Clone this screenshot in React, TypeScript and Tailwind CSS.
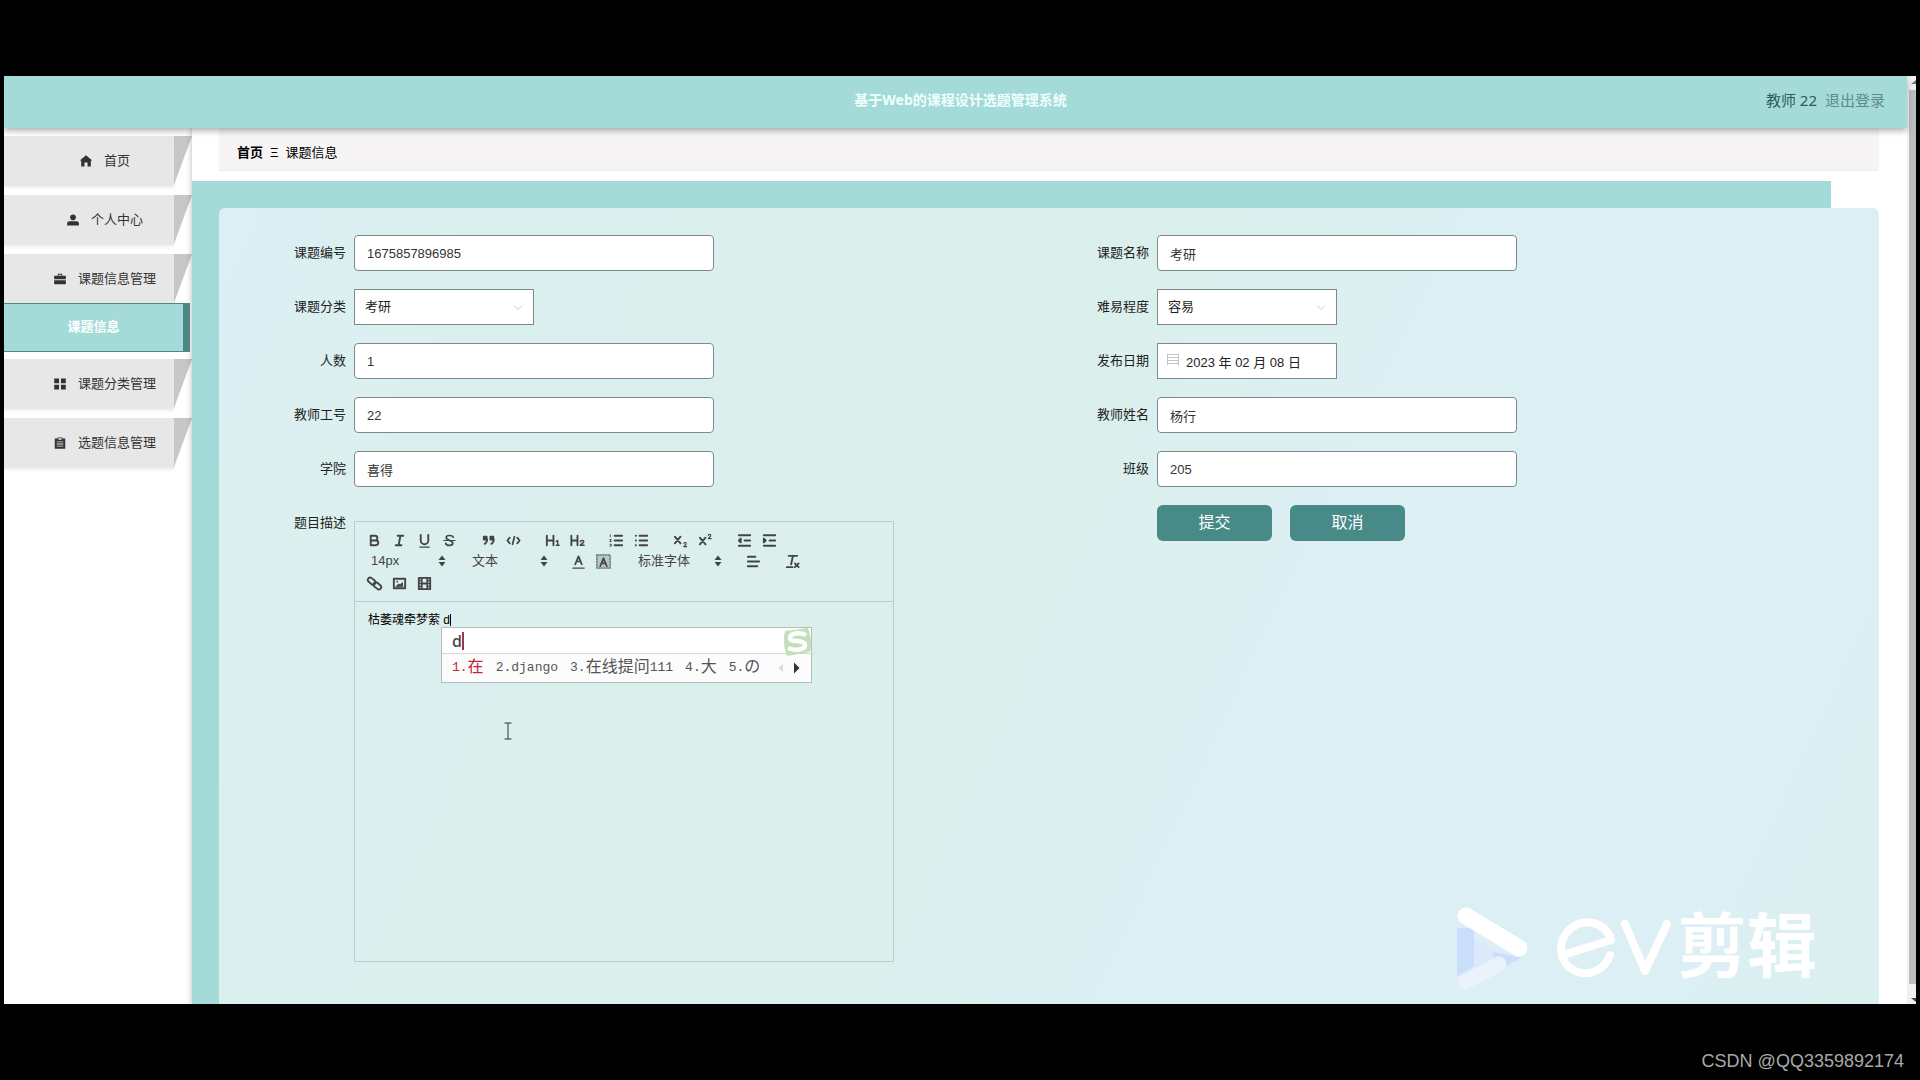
import React, { ReactNode } from "react";

const FONT = 'font-["Liberation_Sans","Noto_Sans_CJK_SC",sans-serif]';

function Icon({ d, className }: { d: string; className: string }) {
  return (
    <svg viewBox="0 0 1024 1024" className={className} fill="currentColor" aria-hidden="true">
      <path fillRule="evenodd" d={d} />
    </svg>
  );
}

const HOME = "M512 30 30 420V500H100V980H380V640H644V980H924V500H994V420Z";
const USER = "M512 40A245 245 0 1 1 512 530A245 245 0 0 1 512 40ZM10 984V800Q10 620 200 610H824Q1014 620 1014 800V984Z";
const CASE = "M320 230V100Q320 70 350 70H674Q704 70 704 100V230H980Q1010 230 1010 260V540H14V260Q14 230 44 230ZM390 140V230H634V140ZM14 610H1010V920Q1010 950 980 950H44Q14 950 14 920Z";
const GRID = "M20 40H430V440H20ZM594 40H1004V440H594ZM20 580H430V980H20ZM594 580H1004V980H594Z";
const CLIP = "M300 130V40H724V130H960V1000H64V130ZM370 100V230H654V100ZM230 380V450H794V380ZM230 560V630H794V560ZM230 740V810H794V740Z";

function SideItem({ icon, label }: { icon: string; label: string }) {
  return (
    <a href="#" className="flex h-[50px] w-full text-[#333]">
      <span className="flex min-w-0 flex-1 items-center justify-center gap-3 bg-[#e8e7e7] pl-8 shadow-[0_2px_3px_#eeeeee]">
        <Icon d={icon} className="size-3" />
        <span className="whitespace-nowrap">{label}</span>
      </span>
      <svg viewBox="0 0 18 50" className="h-[50px] w-[18px] shrink-0" preserveAspectRatio="none" aria-hidden="true">
        <polygon points="0,0 18,0 0,49" fill="#c8c6c7" />
      </svg>
    </a>
  );
}

function Field({ id, label, top, children }: { id: string; label: string; top?: boolean; children: ReactNode }) {
  return (
    <div className={top ? "flex items-start" : "flex h-9 items-center"}>
      <label htmlFor={id} className={top ? "w-[108px] shrink-0 pr-2 text-right leading-9" : "w-[108px] shrink-0 pr-2 text-right"}>
        {label}
      </label>
      {children}
    </div>
  );
}

function TextField({ id, label, value }: { id: string; label: string; value: string }) {
  return (
    <Field id={id} label={label}>
      <input id={id} type="text" defaultValue={value} className="h-9 w-[360px] rounded border border-[#7b8a8a] bg-white px-3 text-[#333]" />
    </Field>
  );
}

function SelectField({ id, label, value }: { id: string; label: string; value: string }) {
  return (
    <Field id={id} label={label}>
      <div className="relative">
        <select id={id} className="h-9 w-[180px] appearance-none border border-[#7b8a8a] bg-white px-[10px] text-[#222]">
          <option>{value}</option>
        </select>
        <svg viewBox="0 0 12 12" className="pointer-events-none absolute top-3 right-[10px] size-3" fill="none" stroke="#c9ccd3" aria-hidden="true">
          <path d="M2 4.5 6 8.5 10 4.5" />
        </svg>
      </div>
    </Field>
  );
}

function Tool({ name, children }: { name: string; children: ReactNode }) {
  return (
    <button type="button" aria-label={name} className="flex h-5 w-[25px] items-center justify-center">
      <svg viewBox="0 0 18 18" className="size-[17px]" fill="none" stroke="#444" strokeWidth="2" strokeLinecap="round" strokeLinejoin="round">
        {children}
      </svg>
    </button>
  );
}

function Picker({ label, value }: { label: string; value: string }) {
  return (
    <button type="button" aria-label={label} className="flex h-5 items-center justify-between text-[#444]">
      {value}
      <svg viewBox="0 0 8 12" className="h-3 w-2" fill="#444" aria-hidden="true">
        <path d="M0.500 5 4 0.500 7.500 5ZM0.500 7 4 11.500 7.500 7Z" />
      </svg>
    </button>
  );
}

function Toolbar() {
  return (
    <div className="flex h-20 flex-col border-b border-[#b9cfce] px-[7px] pt-2">
      <div className="flex h-5">
        <Tool name="粗体">
          <path d="M5 4H9.500A2.500 2.500 0 0 1 9.500 9H5ZM5 9H10.500A2.500 2.500 0 0 1 10.500 14H5Z" />
        </Tool>
        <Tool name="斜体">
          <path d="M7 4H13M5 14H11M8 14 10 4" />
        </Tool>
        <Tool name="下划线">
          <path d="M5 3V9A4 4 0 0 0 13 9V3" />
          <path d="M4 16H14" strokeWidth="1.400" />
        </Tool>
        <Tool name="删除线">
          <path d="M13 5.500C12 3 5.500 3 5.500 6C5.500 9 12.500 8.500 12.500 12C12.500 15 5.500 15 5 12" strokeWidth="1.800" />
          <path d="M3 9H15" strokeWidth="1.300" />
        </Tool>
        <span className="w-[14px]" />
        <Tool name="引用">
          <path d="M4 5H7V8H4ZM11 5H14V8H11Z" fill="#444" />
          <path d="M7.500 8C7.500 11 6 12 5 12.500M14.500 8C14.500 11 13 12 12 12.500" />
        </Tool>
        <Tool name="代码">
          <path d="M5 6 2.500 9 5 12M13 6 15.500 9 13 12M10 5 8 13" strokeWidth="1.800" />
        </Tool>
        <span className="w-[14px]" />
        <Tool name="标题一">
          <path d="M3 4V14M10 4V14M3 9H10" />
          <path d="M13 10 14.500 9V14M13 14H16" strokeWidth="1.500" />
        </Tool>
        <Tool name="标题二">
          <path d="M2.500 4V14M9 4V14M2.500 9H9" />
          <path d="M12 10C12.500 8.500 16 8.500 15.500 10.500C15 12 12.500 12.500 12 14H16" strokeWidth="1.500" />
        </Tool>
        <span className="w-[14px]" />
        <Tool name="有序列表">
          <path d="M7 4H15M7 9H15M7 14H15" />
          <path d="M2.500 3V5M2 8H3.500L2 10H3.500M2 13H3.500V15H2" strokeWidth="1" />
        </Tool>
        <Tool name="无序列表">
          <path d="M7 4H15M7 9H15M7 14H15M3 4H3.100M3 9H3.100M3 14H3.100" />
        </Tool>
        <span className="w-[14px]" />
        <Tool name="下标">
          <path d="M3 5 9 12M9 5 3 12" />
          <path d="M12.500 12C13 10.500 15.500 11 15 12.500L12.500 15.500H15.500" strokeWidth="1.200" />
        </Tool>
        <Tool name="上标">
          <path d="M3 6 9 13M9 6 3 13" />
          <path d="M12 3.500C12.500 2 15 2.500 14.500 4L12 7H15" strokeWidth="1.200" />
        </Tool>
        <span className="w-[14px]" />
        <Tool name="减少缩进">
          <path d="M3 3.500H15M9 9H15M3 14.500H15" />
          <path d="M5 7V11L3 9Z" fill="#444" />
        </Tool>
        <Tool name="增加缩进">
          <path d="M3 3.500H15M9 9H15M3 14.500H15" />
          <path d="M3 7V11L5 9Z" fill="#444" />
        </Tool>
      </div>
      <div className="flex h-[22px] items-center">
        <div className="grid w-[84px] pl-[9px]"><Picker label="字号" value="14px" /></div>
        <span className="w-[18px]" />
        <div className="grid w-[84px] pl-2"><Picker label="文本类型" value="文本" /></div>
        <span className="w-[18px]" />
        <Tool name="文字颜色">
          <path d="M5.500 12 9 3.500 12.500 12M7 9H11" strokeWidth="1.800" />
          <path d="M3 16H15" strokeWidth="1.400" />
        </Tool>
        <Tool name="背景颜色">
          <path d="M2 2H16V16H2Z" stroke="#7d8b8b" strokeDasharray="1 2" fill="#b7c8c6" />
          <path d="M5.500 14 9 5.500 12.500 14M7 11H11" strokeWidth="1.800" />
        </Tool>
        <span className="w-[14px]" />
        <div className="grid w-[92px] pl-2"><Picker label="字体" value="标准字体" /></div>
        <span className="w-[19px]" />
        <Tool name="对齐">
          <path d="M3 4H11M3 9H15M3 14H13" />
        </Tool>
        <span className="w-[14px]" />
        <Tool name="清除格式">
          <path d="M5 3H14M9.500 3 7.500 12M3 15H9M11.500 11 15.500 15M15.500 11 11.500 15" />
        </Tool>
      </div>
      <div className="flex h-[22px] items-center">
        <Tool name="链接">
          <rect x="1.500" y="4" width="9" height="5" rx="2.500" transform="rotate(40 6 6.500)" />
          <rect x="7.500" y="9" width="9" height="5" rx="2.500" transform="rotate(40 12 11.500)" />
        </Tool>
        <Tool name="图片">
          <path d="M3 4H15V14H3Z" />
          <path d="M5.500 12 8 9.500 9.500 10.500 12 8 12.500 12Z" fill="#444" strokeWidth="1" />
          <path d="M6.500 7H6.600" />
        </Tool>
        <Tool name="视频">
          <path d="M3 3H15V15H3ZM6 3V15M12 3V15M6 9H12" />
          <path d="M3 6H5M3 9H5M3 12H5M13 6H15M13 9H15M13 12H15" strokeWidth="1" />
        </Tool>
      </div>
    </div>
  );
}

function Candidate({ latin, han = "", tail = "", active }: { latin: string; han?: string; tail?: string; active?: boolean }) {
  return (
    <span className={active ? "flex items-center text-[#c2243c]" : "flex items-center"}>
      {latin}
      <span className="text-base">{han}</span>
      {tail}
    </span>
  );
}

function ImePopup() {
  return (
    <div className="absolute top-[105px] left-[86px] w-[371px] border border-[#b4bcbc] bg-[#fcfcfd] font-['Liberation_Mono','Noto_Sans_CJK_SC',monospace] text-[#555]">
      <div className="flex h-[26px] items-center border-b border-[#d5d8d8] bg-white px-[10px]">
        <span className="font-['Noto_Sans',sans-serif] text-base font-medium text-[#444]">d</span>
        <span className="h-[18px] w-[2px] bg-[#a8324a]" />
      </div>
      <div className="flex h-[28px] items-center gap-3 px-[10px] text-[13px] whitespace-nowrap">
        <Candidate latin="1." han="在" active />
        <Candidate latin="2.django" />
        <Candidate latin="3." han="在线提问" tail="111" />
        <Candidate latin="4." han="大" />
        <Candidate latin="5." han="の" />
        <svg viewBox="0 0 24 12" className="ml-auto h-3 w-6 shrink-0" aria-hidden="true">
          <path d="M6 2V10L1 6Z" fill="#dddddd" />
          <path d="M17 0.500V11.500L22.500 6Z" fill="#333" />
        </svg>
      </div>
      <svg viewBox="0 0 30 30" className="absolute -top-px -right-px size-[30px]" aria-hidden="true">
        <path d="M3 4 26 1Q31 14 28 25L5 29Q0 16 3 4Z" fill="#c3dfbb" />
        <path d="M24 8C18 5 8 6 8 11C8 16 23 12 23 18C23 23 13 24 6 21" fill="none" stroke="#ffffff" strokeWidth="4.500" />
      </svg>
    </div>
  );
}

function Watermark() {
  return (
    <div className="pointer-events-none absolute right-[62px] bottom-[14px] flex items-center gap-6 text-white" aria-label="EV剪辑">
      <svg viewBox="0 0 76 84" className="h-[84px] w-[76px]" aria-hidden="true">
        <path d="M2 22 40 44 66 52 30 74 2 70Z" fill="#dce9fb" />
        <path d="M2 22H19V60L2 70Z" fill="#c9defb" />
        <path d="M38 46 66 52 38 66Z" fill="#cddcfa" />
        <path d="M10 76 44 58" stroke="#e9f2fd" strokeWidth="15" strokeLinecap="round" />
        <path d="M11 10 64 42" stroke="#ffffff" strokeWidth="17" strokeLinecap="round" />
      </svg>
      <div className="flex items-center">
        <svg viewBox="0 0 118 60" className="h-[60px] w-[118px]" fill="none" stroke="#ffffff" strokeWidth="8" strokeLinecap="round" strokeLinejoin="round" aria-hidden="true">
          <path d="M8 37 56 22C50 3 28 -1 14 12C1 25 5 46 20 53C34 59 50 52 55 37" />
          <path d="M70 6 90 53 112 6" />
        </svg>
        <span className="pl-1 text-[70px] leading-[72px] font-bold">剪辑</span>
      </div>
    </div>
  );
}

export default function App() {
  return (
    <div className={`${FONT} flex min-h-screen flex-col bg-black pt-[76px] text-[13px] leading-5 text-[#222]`}>
      <div className="mx-1 flex h-[928px] overflow-hidden bg-white">
        <div className="flex min-w-0 flex-1 flex-col">
          <header className="relative z-10 grid h-[52px] shrink-0 grid-cols-[1fr_auto_1fr] items-center bg-[#a4dbd9] pr-[22px] pb-1 pl-8 font-['Noto_Sans','Noto_Sans_CJK_SC',sans-serif] shadow-[0_3px_6px_rgba(0,0,0,0.3)]">
            <span />
            <h1 className="text-sm font-bold text-[#effffd]">基于Web的课程设计选题管理系统</h1>
            <div className="flex justify-end gap-2 text-[15px] text-[#2f5a5c]">
              <span>教师 22</span>
              <a href="#" className="text-[#5f8a8c]">退出登录</a>
            </div>
          </header>
          <div className="flex min-h-0 flex-1">
            <nav className="flex w-[188px] shrink-0 flex-col gap-[9px] pt-2">
              <SideItem icon={HOME} label="首页" />
              <SideItem icon={USER} label="个人中心" />
              <div className="-mb-[2px]">
                <SideItem icon={CASE} label="课题信息管理" />
                <a href="#" className="relative -mt-px mr-[2px] flex h-[49px] items-center justify-center border-y border-r-[7px] border-y-[#4f8785] border-r-[#4f8785] bg-[#a4dbd9] pb-[2px] font-bold text-white">
                  课题信息
                </a>
              </div>
              <SideItem icon={GRID} label="课题分类管理" />
              <SideItem icon={CLIP} label="选题信息管理" />
            </nav>
            <main className="flex min-w-0 flex-1 flex-col shadow-[0_0_6px_rgba(0,0,0,0.3)]">
              <div className="mr-[28px] ml-[27px] flex h-[43px] shrink-0 items-center gap-[7px] border-b border-[#eeecec] bg-[#f6f4f5] px-[18px] pt-2 text-black">
                <a href="#" className="font-bold">首页</a>
                <span>Ξ</span>
                <span>课题信息</span>
              </div>
              <div className="mt-[10px] flex flex-1 flex-col bg-[linear-gradient(#a4dbd9,#a4dbd9)] bg-[size:calc(100%-76px)_100%] bg-no-repeat pt-[27px] pr-[28px] pl-[27px]">
                <form className="relative grid flex-1 grid-cols-2 content-start gap-y-[18px] rounded-t-md bg-[linear-gradient(115deg,#dceff5_0%,#dbf0ee_14%,#dbf0ed_48%,#dceff3_62%,#dceff4_90%,#dbf0ee_100%)] px-[27px] pt-[27px]">
                  <TextField id="no" label="课题编号" value="1675857896985" />
                  <TextField id="name" label="课题名称" value="考研" />
                  <SelectField id="type" label="课题分类" value="考研" />
                  <SelectField id="level" label="难易程度" value="容易" />
                  <TextField id="count" label="人数" value="1" />
                  <Field id="date" label="发布日期">
                    <div className="relative">
                      <input id="date" type="text" defaultValue="2023 年 02 月 08 日" className="h-9 w-[180px] border border-[#7b8a8a] bg-white pr-2 pl-7 text-[#222]" />
                      <svg viewBox="0 0 12 12" className="absolute top-[11px] left-[10px] size-3" fill="none" stroke="#bfc4c8" aria-hidden="true">
                        <path d="M0 0.500H12M0 3.500H12M0 6.500H12M0 9.500H12M0.500 0V11M11.500 0V11" />
                      </svg>
                    </div>
                  </Field>
                  <TextField id="tno" label="教师工号" value="22" />
                  <TextField id="tname" label="教师姓名" value="杨行" />
                  <TextField id="college" label="学院" value="喜得" />
                  <TextField id="class" label="班级" value="205" />
                  <Field id="desc" label="题目描述" top>
                    <div className="relative mt-4 w-[540px] border border-[#b9cfce]">
                      <Toolbar />
                      <div id="desc" role="textbox" aria-label="题目描述" className="relative h-[359px] px-[13px] pt-[10px]">
                        <p className="flex items-center text-xs text-black">
                          枯萎魂牵梦萦 d<span className="h-3 w-px bg-black" />
                        </p>
                        <svg viewBox="0 0 8 18" className="absolute top-[120px] left-[149px] h-[18px] w-2" fill="none" stroke="#333" aria-hidden="true">
                          <path d="M0.500 1H7.500M0.500 17H7.500M4 1V17" />
                        </svg>
                      </div>
                      <ImePopup />
                    </div>
                  </Field>
                  <div className="flex gap-[18px] pl-[108px] text-base text-white">
                    <button type="submit" className="h-9 w-[115px] rounded-md bg-[#478a87]">提交</button>
                    <button type="button" className="h-9 w-[115px] rounded-md bg-[#478a87]">取消</button>
                  </div>
                  <Watermark />
                </form>
              </div>
            </main>
          </div>
        </div>
        <div className="flex w-[9px] shrink-0 flex-col bg-[#f1f1f1]">
          <svg viewBox="0 0 9 14" className="h-[14px] w-[9px]" fill="#777" aria-hidden="true">
            <path d="M4 8 9 4V8Z" />
          </svg>
          <div className="ml-[2px] flex-1 bg-[#bdbdbf]" />
          <svg viewBox="0 0 9 20" className="h-5 w-[9px]" fill="#444" aria-hidden="true">
            <path d="M4 14H9V18Z" />
          </svg>
        </div>
      </div>
      <footer className="mt-auto pr-4 pb-[5px] text-right text-lg text-[#a9a9a9]">CSDN @QQ3359892174</footer>
    </div>
  );
}
